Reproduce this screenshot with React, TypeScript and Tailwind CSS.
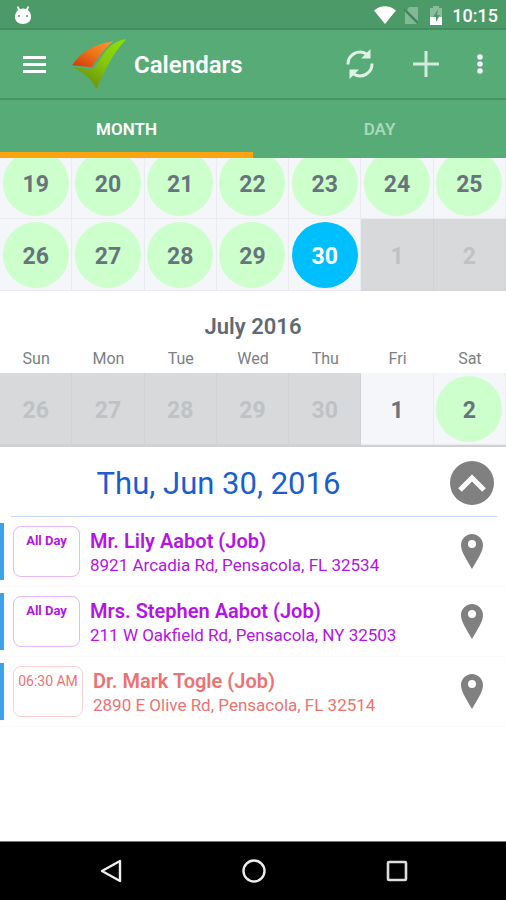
type Day = { day: number; kind: 'busy' | 'selected' | 'free' | 'outside' }

const juneDays: Day[] = [
  { day: 19, kind: 'busy' },
  { day: 20, kind: 'busy' },
  { day: 21, kind: 'busy' },
  { day: 22, kind: 'busy' },
  { day: 23, kind: 'busy' },
  { day: 24, kind: 'busy' },
  { day: 25, kind: 'busy' },
  { day: 26, kind: 'busy' },
  { day: 27, kind: 'busy' },
  { day: 28, kind: 'busy' },
  { day: 29, kind: 'busy' },
  { day: 30, kind: 'selected' },
  { day: 1, kind: 'outside' },
  { day: 2, kind: 'outside' },
]

const julyDays: Day[] = [
  { day: 26, kind: 'outside' },
  { day: 27, kind: 'outside' },
  { day: 28, kind: 'outside' },
  { day: 29, kind: 'outside' },
  { day: 30, kind: 'outside' },
  { day: 1, kind: 'free' },
  { day: 2, kind: 'busy' },
]

const weekdays = ['Sun', 'Mon', 'Tue', 'Wed', 'Thu', 'Fri', 'Sat']

const events = [
  { time: 'All Day', name: 'Mr. Lily Aabot (Job)', address: '8921 Arcadia Rd, Pensacola, FL 32534', allDay: true },
  { time: 'All Day', name: 'Mrs. Stephen Aabot (Job)', address: '211 W Oakfield Rd, Pensacola, NY 32503', allDay: true },
  { time: '06:30 AM', name: 'Dr. Mark Togle (Job)', address: '2890 E Olive Rd, Pensacola, FL 32514', allDay: false },
]

const cellStyles = {
  busy: 'bg-[#f5f6f9] border-[#e9ebee]',
  selected: 'bg-[#f5f6f9] border-[#e9ebee]',
  free: 'bg-[#f5f6f9] border-[#e9ebee]',
  outside: 'bg-[#d7d9db] border-[#d0d2d4]',
}

const dayStyles = {
  busy: 'bg-[#ccffcc] text-[#67747c]',
  selected: 'bg-[#00bfff] text-white',
  free: 'text-[#67747c]',
  outside: 'text-[#bfc2c5]',
}

function Week({ days }: { days: Day[] }) {
  return (
    <div className="grid grid-cols-7">
      {days.map((d, i) => (
        <div
          key={i}
          className={`flex h-[72px] items-center justify-center border-r border-b ${cellStyles[d.kind]}`}
        >
          <button className={`size-[66px] rounded-full pt-1 text-[23px] leading-6 font-bold ${dayStyles[d.kind]}`}>
            {d.day}
          </button>
        </div>
      ))}
    </div>
  )
}

function StatusBar() {
  return (
    <div className="flex h-[30px] items-center justify-between border-b-2 border-[#458c60] bg-[#4d9a69] pt-0.5 pr-2 pl-[15px] text-white">
      <svg width="16" height="18" viewBox="0 0 16 18" fill="#fff">
        <path d="M3 0 5 3a8 8 0 0 1 6 0L13 0l1 1-1 3C15 6 16 8 16 11 16 15 13 18 8 18S0 15 0 11C0 8 1 6 3 4L2 1z" />
        <circle cx="4" cy="10" r="1" fill="#4d9a69" />
        <circle cx="12" cy="10" r="1" fill="#4d9a69" />
      </svg>
      <div className="flex items-center">
        <svg width="22" height="18" viewBox="0 0 22 18" fill="#fff">
          <path d="M0 4.500C6.500-1.200 15.500-1.200 22 4.500L11 18z" />
        </svg>
        <svg className="ml-2" width="15" height="17" viewBox="0 0 15 17">
          <path d="M5 0h9v14L3 3zM1 5l12 12H1z" fill="#fff" opacity=".3" />
          <path d="M0 2 14 16" stroke="#3f8059" strokeWidth="1.300" />
        </svg>
        <svg className="ml-[11px]" width="12" height="19" viewBox="0 0 12 19">
          <path d="M3 0h6v2h3v17H0V2h3z" fill="#fff" opacity=".35" />
          <path d="M0 11h12v8H0z" fill="#fff" />
          <path d="M8 3 3 11h3v5l4-7H7z" fill="#4d9a69" />
        </svg>
        <span className="pt-0.5 pl-[10px] text-[18px] leading-6 font-medium">10:15</span>
      </div>
    </div>
  )
}

function Logo() {
  return (
    <svg width="54" height="50" viewBox="216 116 162 151">
      <defs>
        <linearGradient id="wing" x1="1" y1="0" x2="0" y2="1">
          <stop offset="0" stopColor="#ff9a2a" />
          <stop offset=".5" stopColor="#f0701a" />
          <stop offset="1" stopColor="#c93806" />
        </linearGradient>
        <linearGradient id="check" x1="1" y1="0" x2=".3" y2="1">
          <stop offset="0" stopColor="#8fe000" />
          <stop offset=".5" stopColor="#86c80c" />
          <stop offset="1" stopColor="#6b8f08" />
        </linearGradient>
      </defs>
      <path d="M216 195C240 158 285 130 341 123C314 144 300 165 276 201C256 199 236 197 216 195Z" fill="url(#wing)" />
      <path
        d="M220 201C238 203 256 207 278 207C291 197 298 178 313 158C331 134 352 120 379 117C347 150 326 188 309 225C301 242 295 254 289 267C278 240 254 220 220 201Z"
        fill="url(#check)"
      />
    </svg>
  )
}

function AppBar() {
  return (
    <header className="flex h-[70px] items-center border-b-2 border-[#479162] bg-[#57ab77] text-white">
      <button aria-label="Menu" className="ml-[23px]">
        <svg width="23" height="17" viewBox="0 0 23 17" fill="#fff">
          <path d="M0 0h23v3H0zM0 7h23v3H0zM0 14h23v3H0z" />
        </svg>
      </button>
      <div className="ml-[26px]">
        <Logo />
      </div>
      <h1 className="flex-1 pt-0.5 pl-2 text-[24px] leading-8 font-semibold">Calendars</h1>
      <button aria-label="Refresh" className="flex w-[66px] justify-center">
        <svg width="28" height="30" viewBox="0 0 28 30" fill="none" stroke="#e0f2e6" strokeWidth="3">
          <path d="M2 15.500A12 12 0 0 1 20.500 5" />
          <path d="M26 14.500A12 12 0 0 1 7.500 25" />
          <path d="M24.500 0v9.500H15zM3.500 30v-9.500H13z" fill="#e0f2e6" stroke="none" />
        </svg>
      </button>
      <button aria-label="Add" className="flex w-[66px] justify-center">
        <svg width="26" height="26" viewBox="0 0 26 26" stroke="#d3ebdb" strokeWidth="3">
          <path d="M13 0v26M0 13h26" />
        </svg>
      </button>
      <button aria-label="More options" className="mr-[5px] flex w-[42px] justify-center">
        <svg width="6" height="20" viewBox="0 0 6 20" fill="#fff">
          <circle cx="3" cy="3" r="2.700" />
          <circle cx="3" cy="10" r="2.700" />
          <circle cx="3" cy="17" r="2.700" />
        </svg>
      </button>
    </header>
  )
}

export default function App() {
  return (
    <div className="flex min-h-screen flex-col bg-white font-['Roboto',sans-serif]">
      <StatusBar />
      <AppBar />
      <nav className="grid h-[58px] grid-cols-2 bg-[#57ab77] text-[17px] font-semibold">
        <button className="border-b-[6px] border-[#fca410] pt-2 text-white">MONTH</button>
        <button className="border-b-[6px] border-[#57ab77] pt-2 text-[#a9d7b9]">DAY</button>
      </nav>

      {/* the month list is scrolled part way through June */}
      <section className="flex h-[289px] flex-col justify-end overflow-hidden border-b-2 border-[#cfd1d3]">
        <div className="shrink-0">
          <Week days={juneDays} />
          <h2 className="pt-6 text-center text-[22px] leading-6 font-semibold text-[#5f6a72]">July 2016</h2>
          <div className="grid grid-cols-7 pt-2 pb-0.5 text-center text-[16px] leading-6 text-[#7a8085]">
            {weekdays.map((name) => (
              <span key={name}>{name}</span>
            ))}
          </div>
          <Week days={julyDays} />
        </div>
      </section>

      <main className="flex-1">
        <div className="mr-[9px] ml-[11px] flex h-[70px] items-center border-b border-[#c3d8fb] pt-0.5">
          <h2 className="flex-1 pt-0.5 pr-6 text-center text-[31px] leading-10 text-[#1a5fd0]">Thu, Jun 30, 2016</h2>
          <button
            aria-label="Collapse"
            className="mr-[3px] flex size-11 items-center justify-center rounded-full bg-[#808080]"
          >
            <svg width="28" height="18" viewBox="0 0 28 18" fill="none" stroke="#fff" strokeWidth="5">
              <path d="M2 16 14 4l12 12" />
            </svg>
          </button>
        </div>

        <ul>
          {events.map((event) => (
            <li
              key={event.name}
              className={`flex h-[70px] items-center border-b border-[#fafafa] ${event.allDay ? 'text-[#b414e6]' : 'text-[#ee7272]'}`}
            >
              <div className="h-[57px] w-1 bg-[#3ea3e6]" />
              <div
                className={`ml-[9px] h-[51px] rounded-lg border pt-1 text-center leading-5 ${
                  event.allDay
                    ? 'w-[67px] border-[#e6b8fa] text-[13px] font-bold'
                    : 'w-[70px] border-[#fbd0d4] text-[14px]'
                }`}
              >
                {event.time}
              </div>
              <div className="flex-1 pt-0.5 pl-2.5">
                <h3 className="text-[20px] leading-6 font-semibold">{event.name}</h3>
                <p className="text-[17px] leading-6">{event.address}</p>
              </div>
              <button aria-label="Show on map" className="mr-[23px]">
                <svg width="22" height="35" viewBox="0 0 22 35" fill="#808080">
                  <path
                    fillRule="evenodd"
                    d="M11 0C5 0 0 5 0 11 0 18 6 26 11 35c5-9 11-17 11-24C22 5 17 0 11 0zm0 6a4 4 0 1 1 0 8 4 4 0 0 1 0-8z"
                  />
                </svg>
              </button>
            </li>
          ))}
        </ul>
      </main>

      <footer className="flex h-[59px] items-center justify-center gap-[120px] border-t border-[#777] bg-black pl-0.5">
        <button aria-label="Back">
          <svg width="22" height="24" viewBox="0 0 22 24" fill="none" stroke="#eee" strokeWidth="2.400">
            <path d="M20 2v20L2 12z" strokeLinejoin="round" />
          </svg>
        </button>
        <button aria-label="Home">
          <svg width="24" height="24" viewBox="0 0 24 24" fill="none" stroke="#eee" strokeWidth="2.400">
            <circle cx="12" cy="12" r="10.500" />
          </svg>
        </button>
        <button aria-label="Recent apps">
          <svg width="22" height="22" viewBox="0 0 22 22" fill="none" stroke="#ddd" strokeWidth="2.600">
            <rect x="2" y="2" width="18" height="18" rx="1" />
          </svg>
        </button>
      </footer>
    </div>
  )
}
